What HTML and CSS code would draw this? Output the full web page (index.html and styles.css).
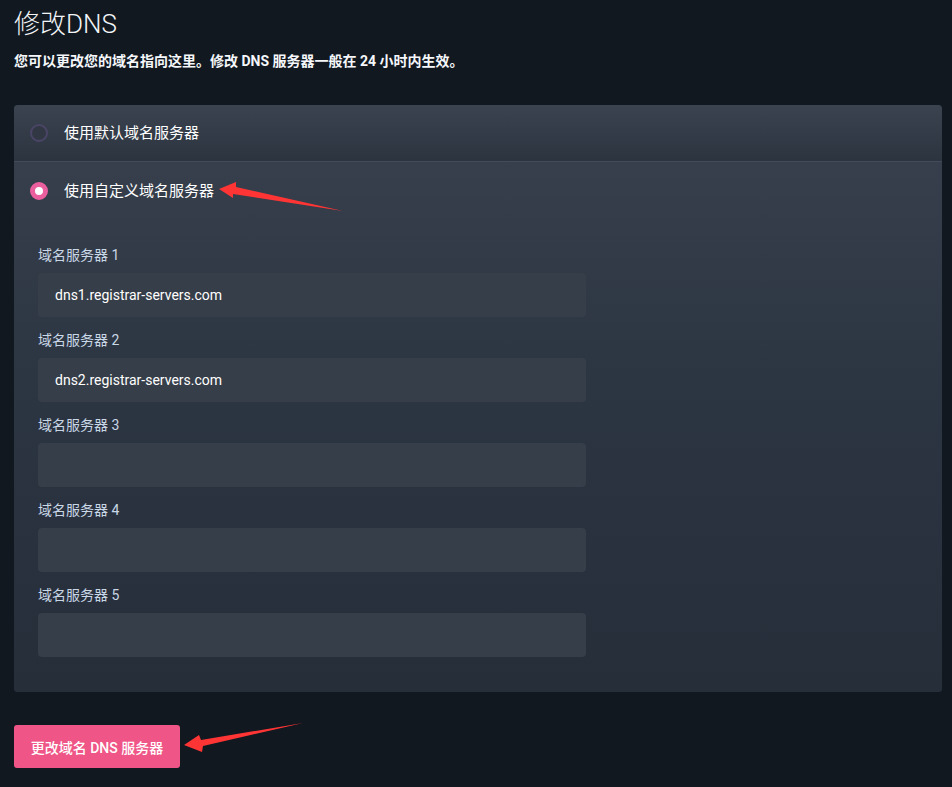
FILE: index.html
```html
<!DOCTYPE html>
<html lang="zh-CN">
<head>
<meta charset="utf-8">
<title>修改DNS</title>
<link rel="stylesheet" href="styles.css">
</head>
<body>
<div class="page">
  <h1 class="title">修改DNS</h1>
  <p class="subtitle">您可以更改您的域名指向这里。修改 DNS 服务器一般在 24 小时内生效。</p>

  <div class="card">
    <div class="option option-default">
      <span class="radio"></span>
      <span class="option-label">使用默认域名服务器</span>
    </div>
    <div class="custom">
      <div class="option">
        <span class="radio radio-on"></span>
        <span class="option-label">使用自定义域名服务器</span>
      </div>
      <div class="fields">
        <div class="field">
          <label class="field-label">域名服务器 1</label>
          <div class="input">dns1.registrar-servers.com</div>
        </div>
        <div class="field">
          <label class="field-label">域名服务器 2</label>
          <div class="input">dns2.registrar-servers.com</div>
        </div>
        <div class="field">
          <label class="field-label">域名服务器 3</label>
          <div class="input"></div>
        </div>
        <div class="field">
          <label class="field-label">域名服务器 4</label>
          <div class="input"></div>
        </div>
        <div class="field">
          <label class="field-label">域名服务器 5</label>
          <div class="input"></div>
        </div>
      </div>
    </div>
  </div>

  <button class="btn">更改域名 DNS 服务器</button>
</div>

<svg class="arrows" width="952" height="787" viewBox="0 0 952 787">
  <polygon class="arrow" points="219,189 236,182 236,187 343,211 233,194 233,198"/>
  <polygon class="arrow" points="184,745 199,735 201,740 303,723 203,746 202,752"/>
</svg>
</body>
</html>
```

FILE: styles.css
```css
* { box-sizing: border-box; }
html, body {
  margin: 0;
  padding: 0;
  background: #111820;
}
body {
  font-family: Roboto, "Noto Sans CJK SC", sans-serif;
  color: #ffffff;
  position: relative;
  width: 952px;
  height: 787px;
  overflow: hidden;
}
.page {
  padding: 7px 10px 0 14px;
}
.title {
  margin: 0;
  font-size: 26px;
  font-weight: 300;
  line-height: 34px;
  color: #f2f4f7;
}
.subtitle {
  margin: 11px 0 0 0;
  font-size: 14px;
  font-weight: 700;
  line-height: 19px;
  color: #f5f7fa;
}
.card {
  margin-top: 34px;
  border-radius: 4px;
  overflow: hidden;
  background: #262f3b;
}
.option {
  display: flex;
  align-items: center;
  height: 57px;
  padding-left: 16px;
  gap: 16px;
}
.option-default {
  background: linear-gradient(#3a434f, #2c3440);
  border-bottom: 1px solid #424b58;
}
.custom {
  background: linear-gradient(#363f4b 0%, #2c3542 40%, #262e3a 100%);
  padding-bottom: 35px;
}
.radio {
  width: 18px;
  height: 18px;
  border-radius: 50%;
  border: 2px solid #4a4566;
  background: #313844;
  flex: none;
}
.radio-on {
  border: 5px solid #ec5f9e;
  background: #ffffff;
}
.option-label {
  font-size: 15px;
  color: #ffffff;
  line-height: 20px;
}
.fields {
  padding: 27px 24px 0 24px;
  display: flex;
  flex-direction: column;
  gap: 14px;
}
.field {
  display: flex;
  flex-direction: column;
  gap: 9px;
}
.field-label {
  font-size: 14px;
  line-height: 18px;
  color: #c9d7e6;
}
.input {
  width: 548px;
  height: 44px;
  border-radius: 4px;
  background: #363e49;
  padding-left: 17px;
  font-size: 14px;
  line-height: 44px;
  color: #ffffff;
}
.btn {
  margin-top: 33px;
  width: 166px;
  height: 43px;
  border: none;
  border-radius: 3px;
  background: #ef5586;
  color: #ffffff;
  font-family: Roboto, "Noto Sans CJK SC", sans-serif;
  font-size: 14px;
  font-weight: 500;
  padding: 0;
}
.arrows {
  position: absolute;
  left: 0;
  top: 0;
  pointer-events: none;
}
.arrow {
  fill: #ff3535;
}
```
